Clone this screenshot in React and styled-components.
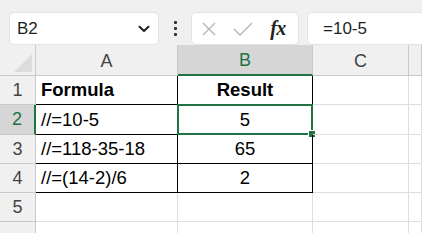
import React from "react";
import styled, { createGlobalStyle } from "styled-components";

const Global = createGlobalStyle`
  html, body { margin: 0; padding: 0; background: #ffffff; }
  body { font-family: "Liberation Sans", Arial, sans-serif; overflow: hidden; }
`;

const Page = styled.div`
  width: 422px;
  height: 233px;
  display: flex;
  flex-direction: column;
  background: #ffffff;
  overflow: hidden;
`;

const Toolbar = styled.div`
  height: 46px;
  background: #f0f0f0;
  display: flex;
  align-items: flex-start;
  padding: 12px 0 0 9px;
  box-sizing: border-box;
`;

const Box = styled.div`
  height: 33px;
  background: #ffffff;
  border-radius: ${(p) => (p.$open ? "5px 0 0 5px" : "5px")};
  border: 1px solid #e3e3e3;
  border-right: ${(p) => (p.$open ? "none" : "1px solid #e3e3e3")};
  box-sizing: border-box;
  display: flex;
  align-items: center;
  flex: ${(p) => p.$flex || "none"};
  width: ${(p) => (p.$w ? `${p.$w}px` : "auto")};
  margin-right: ${(p) => p.$mr || 0}px;
`;

const NameText = styled.span`
  flex: 1;
  padding-left: 7px;
  font-size: 17px;
  color: #1f1f1f;
`;

const Chevron = styled.svg`
  width: 12px;
  height: 8px;
  margin-right: 8px;
`;

const Dots = styled.div`
  width: 32px;
  height: 33px;
  display: flex;
  flex-direction: column;
  align-items: center;
  justify-content: center;
  gap: 3px;
`;

const Dot = styled.span`
  width: 3px;
  height: 3px;
  border-radius: 1px;
  background: #333;
`;

const IconSlot = styled.div`
  width: ${(p) => p.$w}px;
  display: flex;
  align-items: center;
  justify-content: center;
  height: 100%;
`;

const Fx = styled.span`
  font-family: "Liberation Serif", "Times New Roman", serif;
  font-style: italic;
  font-weight: 700;
  font-size: 20px;
  color: #222;
  letter-spacing: -0.5px;
`;

const FormulaText = styled.span`
  padding-left: 15px;
  font-size: 17px;
  color: #1f1f1f;
`;

const Band = styled.div`
  height: 7px;
  background: #e9e9e9;
`;

const Grid = styled.div`
  display: grid;
  grid-template-columns: 36px 142px 135px 96px 1fr;
  grid-template-rows: 31px 29px 30px 29px 29px 29px 29px;
  flex: 1;
`;

const Cell = styled.div`
  position: relative;
  box-sizing: border-box;
  border-right: 1px solid ${(p) => (p.$dark ? "#000" : "#dedede")};
  border-bottom: 1px solid ${(p) => (p.$darkBottom ? "#000" : "#dedede")};
  display: flex;
  align-items: center;
  justify-content: ${(p) => (p.$center ? "center" : "flex-start")};
  padding-left: ${(p) => (p.$center ? 0 : 5)}px;
  font-size: 18.5px;
  font-weight: ${(p) => (p.$bold ? 700 : 400)};
  color: #000;
`;

const ColHead = styled.div`
  box-sizing: border-box;
  background: ${(p) => (p.$active ? "#d6d6d6" : "#f0f0f0")};
  border-right: 1px solid #c9c9c9;
  border-bottom: ${(p) => (p.$active ? "2px solid #217346" : "1px solid #c9c9c9")};
  display: flex;
  align-items: center;
  justify-content: center;
  font-size: 18px;
  color: ${(p) => (p.$active ? "#217346" : "#444")};
  padding-top: 2px;
`;

const Corner = styled.div`
  position: relative;
  box-sizing: border-box;
  background: #f0f0f0;
  border-right: 1px solid #c9c9c9;
  border-bottom: 1px solid #c9c9c9;
`;

const Triangle = styled.div`
  position: absolute;
  right: 3px;
  bottom: 3px;
  width: 0;
  height: 0;
  border-left: 18px solid transparent;
  border-bottom: 18px solid #dcdcdc;
`;

const RowHead = styled.div`
  box-sizing: border-box;
  background: ${(p) => (p.$active ? "#d6d6d6" : "#f0f0f0")};
  border-right: ${(p) => (p.$active ? "2px solid #217346" : "1px solid #c9c9c9")};
  border-bottom: 1px solid #c9c9c9;
  display: flex;
  align-items: center;
  justify-content: center;
  font-size: 18px;
  color: ${(p) => (p.$active ? "#217346" : "#444")};
`;

const Selection = styled.div`
  position: absolute;
  left: -1px;
  top: -1px;
  right: -1px;
  bottom: -1px;
  border: 2px solid #217346;
  pointer-events: none;
`;

const Handle = styled.div`
  position: absolute;
  right: -5px;
  bottom: -5px;
  width: 6px;
  height: 6px;
  background: #217346;
  border: 1px solid #fff;
  box-sizing: content-box;
`;

const rows = [
  { label: "1", a: "Formula", b: "Result", bold: true, table: true },
  { label: "2", a: "//=10-5", b: "5", selected: true, table: true },
  { label: "3", a: "//=118-35-18", b: "65", table: true },
  { label: "4", a: "//=(14-2)/6", b: "2", table: true },
  { label: "5", a: "", b: "" },
  { label: "", a: "", b: "" },
];

export default function App() {
  return (
    <Page>
      <Global />
      <Toolbar>
        <Box $w={150}>
          <NameText>B2</NameText>
          <Chevron viewBox="0 0 12 8">
            <path d="M1.5 1.8 L6 6 L10.5 1.8" fill="none" stroke="#222" strokeWidth="2" strokeLinecap="round" strokeLinejoin="round" />
          </Chevron>
        </Box>
        <Dots>
          <Dot />
          <Dot />
          <Dot />
        </Dots>
        <Box $w={108} $mr={8}>
          <IconSlot $w={34}>
            <svg width="16" height="16" viewBox="0 0 16 16">
              <path d="M2 2 L14 14 M14 2 L2 14" stroke="#b5b5b5" strokeWidth="1.4" fill="none" />
            </svg>
          </IconSlot>
          <IconSlot $w={34}>
            <svg width="22" height="16" viewBox="0 0 22 16">
              <path d="M2 8 L8 14 L20 2" stroke="#b5b5b5" strokeWidth="1.4" fill="none" />
            </svg>
          </IconSlot>
          <IconSlot $w={36}>
            <Fx>fx</Fx>
          </IconSlot>
        </Box>
        <Box $flex="1" $open>
          <FormulaText>=10-5</FormulaText>
        </Box>
      </Toolbar>
      <Band />
      <Grid>
        <Corner>
          <Triangle />
        </Corner>
        <ColHead>A</ColHead>
        <ColHead $active>B</ColHead>
        <ColHead>C</ColHead>
        <ColHead />
        {rows.map((r, i) => (
          <React.Fragment key={i}>
            <RowHead $active={r.selected}>{r.label}</RowHead>
            <Cell $bold={r.bold} $dark={r.table} $darkBottom={r.table}>
              {r.a}
            </Cell>
            <Cell $center $bold={r.bold} $dark={r.table} $darkBottom={r.table}>
              {r.b}
              {r.selected && (
                <Selection>
                  <Handle />
                </Selection>
              )}
            </Cell>
            <Cell />
            <Cell />
          </React.Fragment>
        ))}
      </Grid>
    </Page>
  );
}
